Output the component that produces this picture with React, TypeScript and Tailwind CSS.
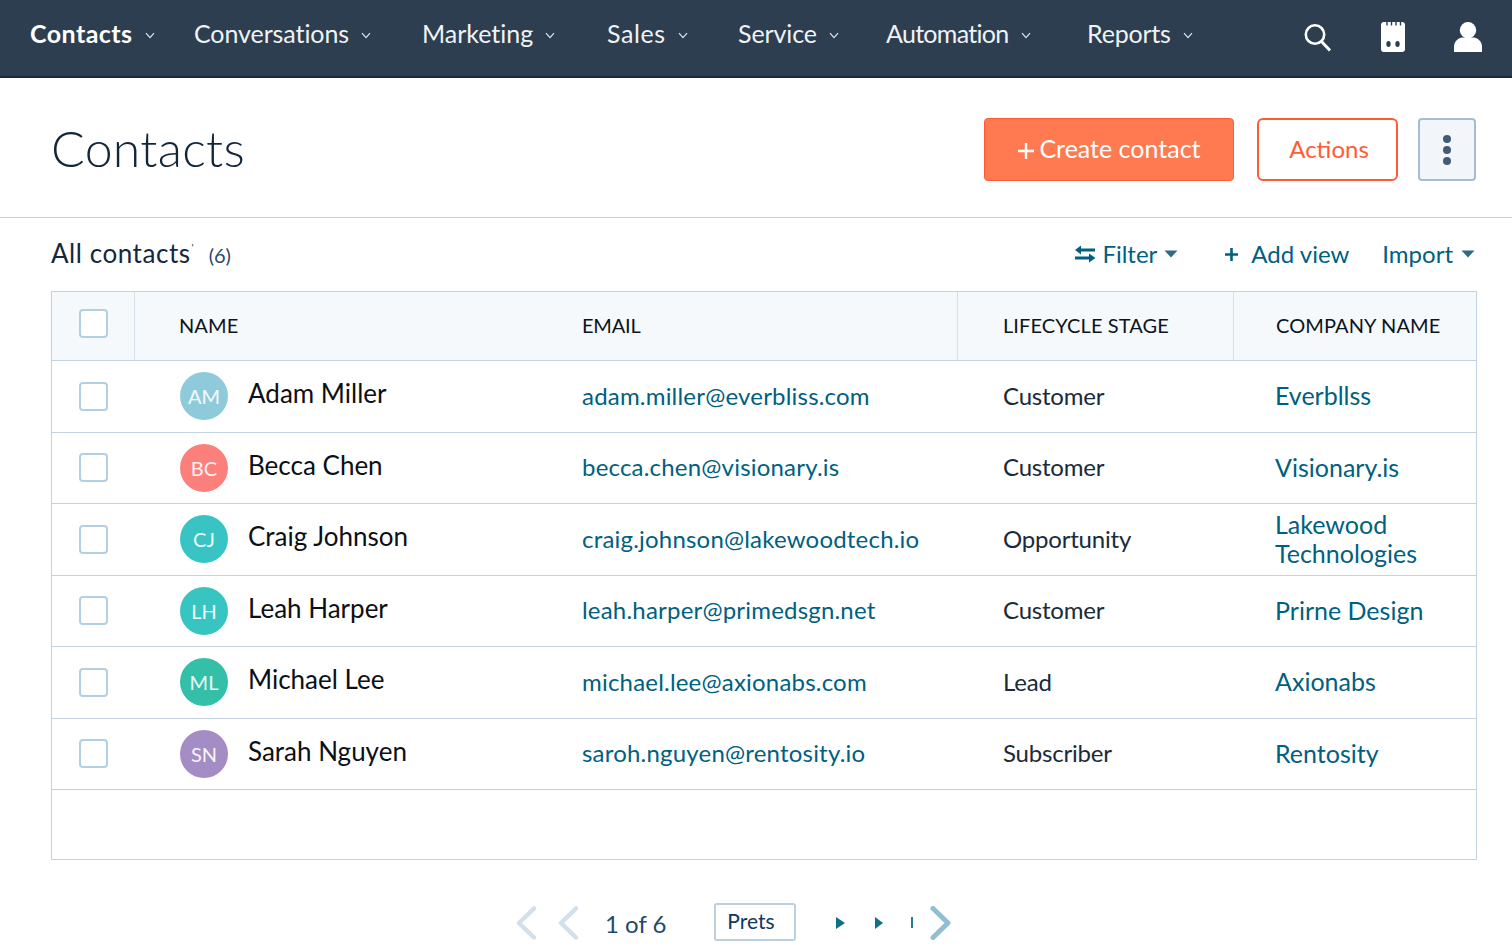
import React from "react";

const F = "font-['Lato','Liberation_Sans',sans-serif]";

const Chevron = () => (
  <svg width="10" height="7" viewBox="0 0 10 7" fill="none" className="mt-[3px]">
    <path d="M1 1.2 L5 5.6 L9 1.2" stroke="#dfe5ea" strokeWidth="1.2" />
  </svg>
);

const Caret = () => (
  <svg width="14" height="8" viewBox="0 0 14 8">
    <path d="M0.5 0.5 H13.5 L7 7.5 Z" fill="#2c6a86" />
  </svg>
);

const navItems = [
  { label: "Contacts", w: "w-[164px]", cls: "font-bold text-white tracking-[0.45px]" },
  { label: "Conversations", w: "w-[228px]", cls: "text-[#f0f3f5] tracking-[-0.08px]" },
  { label: "Marketing", w: "w-[185px]", cls: "text-[#f0f3f5] tracking-[-0.02px]" },
  { label: "Sales", w: "w-[131px]", cls: "text-[#f0f3f5] tracking-[0.6px]" },
  { label: "Service", w: "w-[148px]", cls: "text-[#f0f3f5] tracking-[-0.1px]" },
  { label: "Automation", w: "w-[201px]", cls: "text-[#f0f3f5] tracking-[-0.7px]" },
  { label: "Reports", w: "w-[150px]", cls: "text-[#f0f3f5] tracking-[-0.2px]" },
];

const rows = [
  { i: "AM", name: "Adam Miller", email: "adam.miller@everbliss.com", stage: "Customer", company: ["Everbllss"], bg: "bg-[#8fcadb]" },
  { i: "BC", name: "Becca Chen", email: "becca.chen@visionary.is", stage: "Customer", company: ["Visionary.is"], bg: "bg-[#fb7f7a]" },
  { i: "CJ", name: "Craig Johnson", email: "craig.johnson@lakewoodtech.io", stage: "Opportunity", company: ["Lakewood", "Technologies"], bg: "bg-[#38c4c4]" },
  { i: "LH", name: "Leah Harper", email: "leah.harper@primedsgn.net", stage: "Customer", company: ["Prirne Design"], bg: "bg-[#38c4c0]" },
  { i: "ML", name: "Michael Lee", email: "michael.lee@axionabs.com", stage: "Lead", company: ["Axionabs"], bg: "bg-[#34bfa8]" },
  { i: "SN", name: "Sarah Nguyen", email: "saroh.nguyen@rentosity.io", stage: "Subscriber", company: ["Rentosity"], bg: "bg-[#a48cc4]" },
];

const Check = () => (
  <div className="w-[29px] h-[29px] rounded-[4px] border-2 border-[#b4cfe2] bg-white" />
);

export default function App() {
  return (
    <div className={`${F} w-[1512px] h-[951px] overflow-hidden bg-white text-[#0b1f33]`}>
      <nav className="h-[78px] bg-[#2d3e50] border-b-2 border-[#1a2838] flex items-center pl-[30px] pr-[30px] pb-[8px]">
        {navItems.map((n) => (
          <div key={n.label} className={`${n.w} flex items-center gap-[12px] text-[25px] ${n.cls}`}>
            <span>{n.label}</span>
            <Chevron />
          </div>
        ))}
        <div className="flex items-center ml-auto gap-[49px] mt-[6px]">
          <svg width="28" height="30" viewBox="0 0 28 30" fill="none">
            <circle cx="11" cy="12.5" r="9.2" stroke="#fff" strokeWidth="2.6" />
            <path d="M17.5 19.5 L26 28.5" stroke="#fff" strokeWidth="3" />
          </svg>
          <svg width="24" height="30" viewBox="0 0 24 30">
            <rect x="0" y="0" width="24" height="30" rx="3" fill="#fff" />
            <path d="M6 0 V3.5 M10.5 0 V3.5 M15 0 V3.5 M19.5 0 V3.5" stroke="#2d3e50" strokeWidth="1.4" />
            <ellipse cx="7.5" cy="22" rx="2.2" ry="3" fill="#2d3e50" />
            <ellipse cx="16.5" cy="22" rx="2.2" ry="3" fill="#2d3e50" />
          </svg>
          <svg width="28" height="30" viewBox="0 0 28 30">
            <circle cx="14" cy="8.2" r="8.2" fill="#fff" />
            <path d="M0 30 V24.5 C0 19.5 4.5 15.5 8.5 15.5 H19.5 C23.5 15.5 28 19.5 28 24.5 V30 Z" fill="#fff" />
          </svg>
        </div>
      </nav>

      <header className="h-[140px] border-b border-[#c5ced8] flex items-center justify-between pl-[51px] pr-[36px] pt-[4px]">
        <h1 className="text-[50px] font-light text-[#12263a] tracking-[0.3px] -mt-[3px]">Contacts</h1>
        <div className="flex items-center -mt-[1px]">
          <button className="w-[250px] h-[63px] rounded-[4px] bg-[#ff7a50] border border-[#ff5c35] text-white text-[25px] flex items-center justify-center gap-[5px] pl-[1px]">
            <svg width="16" height="16" viewBox="0 0 16 16" className="mt-[4px]"><path d="M8 0 V16 M0 8 H16" stroke="#fff" strokeWidth="2.4" /></svg>
            Create contact
          </button>
          <button className="w-[141px] h-[63px] ml-[23px] rounded-[6px] bg-white border-2 border-[#ff5c35] text-[#ff5c35] text-[24px] pl-[3px]">Actions</button>
          <button className="w-[58px] h-[63px] ml-[20px] rounded-[4px] bg-[#f2f6fa] border-2 border-[#a5bdd0] flex flex-col items-center justify-center gap-[3px] pt-[2px]">
            <span className="w-[8px] h-[8px] rounded-full bg-[#425b76]" />
            <span className="w-[8px] h-[8px] rounded-full bg-[#425b76]" />
            <span className="w-[8px] h-[8px] rounded-full bg-[#425b76]" />
          </button>
        </div>
      </header>

      <div className="h-[73px] flex items-center justify-between pl-[51px] pr-[37px] pb-[1px]">
        <div className="flex items-baseline -mt-[2px]">
          <span className="text-[26px] text-[#14283c] tracking-[0.55px]">All contacts</span>
          <span className="text-[10px] self-start mt-[6px] ml-[1px]">'</span>
          <span className="text-[20px] text-[#27496b] ml-[15px]">(6)</span>
        </div>
        <div className="flex items-center text-[24px] text-[#00607f]">
          <svg width="22" height="20" viewBox="0 0 22 20" className="mr-[6px]">
            <path d="M6 6 H21 M1 14 H15" stroke="#00607f" strokeWidth="3" />
            <path d="M7 1.5 L1 6 L7 10.5 Z M15 9.5 L21.5 14 L15 18.5 Z" fill="#00607f" />
          </svg>
          <span>Filter</span>
          <span className="ml-[7px]"><Caret /></span>
          <svg width="15" height="15" viewBox="0 0 15 15" className="ml-[46px] mr-[12px]">
            <path d="M7.5 1 V14 M1 7.5 H14" stroke="#00607f" strokeWidth="2.6" />
          </svg>
          <span>Add view</span>
          <span className="ml-[33px]">Import</span>
          <span className="ml-[8px]"><Caret /></span>
        </div>
      </div>

      <div className="mx-[51px] w-[1426px] h-[569px] border border-[#c3d2e0] text-[25px]">
        <div className="h-[69px] grid grid-cols-[83px_447px_376px_276px_1fr] bg-[#f6f9fc] border-b border-[#c3d2e0] text-[20px] tracking-[0.1px] text-[#0b1420]">
          <div className="border-r border-[#d5e0ea] flex items-start pt-[17px] pl-[27px]"><Check /></div>
          <div className="flex items-center pl-[44px] pb-[2px]">NAME</div>
          <div className="flex items-center border-r border-[#d5e0ea] pb-[2px] tracking-[-0.2px]">EMAIL</div>
          <div className="flex items-center border-r border-[#d5e0ea] pl-[45px] pb-[2px]">LIFECYCLE STAGE</div>
          <div className="flex items-center pl-[42px] pb-[2px]">COMPANY NAME</div>
        </div>
        {rows.map((r) => (
          <div key={r.i} className="h-[71.5px] grid grid-cols-[83px_447px_376px_276px_1fr] border-b border-[#c3d2e0] items-center">
            <div className="pl-[27px]"><Check /></div>
            <div className="flex items-center pl-[45px]">
              <div className={`w-[48px] h-[48px] rounded-full ${r.bg} text-white/90 text-[20px] flex items-center justify-center shrink-0`}>{r.i}</div>
              <span className="ml-[20px] text-[26px] text-[#0c0f14] -mt-[5px]">{r.name}</span>
            </div>
            <div className="text-[#00607f] text-[24px] tracking-[0.2px] pb-[1px]">{r.email}</div>
            <div className="pl-[45px] text-[#1a2a3a] text-[24px] tracking-[-0.2px] pb-[1px]">{r.stage}</div>
            <div className="pl-[41px] text-[#00607f] leading-[29px] pb-[1px]">
              {r.company.map((c) => <div key={c}>{c}</div>)}
            </div>
          </div>
        ))}
      </div>

      <div className="h-[73px] mt-[16px] flex items-center justify-start pl-[515px] pt-[20px] text-[#1d4a6e]">
        <svg width="22" height="34" viewBox="0 0 22 34" fill="none"><path d="M19 2.5 L4 17 L19 31.5" stroke="#d3e0ec" strokeWidth="4.5" strokeLinecap="round" strokeLinejoin="round" /></svg>
        <svg width="22" height="34" viewBox="0 0 22 34" fill="none" className="ml-[20px]"><path d="M19 2.5 L4 17 L19 31.5" stroke="#d3e0ec" strokeWidth="4.5" strokeLinecap="round" strokeLinejoin="round" /></svg>
        <span className="ml-[26px] text-[24px] mt-[3px]">1 of 6</span>
        <div className="ml-[48px] w-[82px] h-[38px] -mt-[2px] rounded-[3px] border-2 border-[#bccfdf] flex items-center justify-center text-[21px] text-[#12385a] pr-[9px] pb-[2px]">Prets</div>
        <svg width="9" height="12" viewBox="0 0 9 12" className="ml-[40px]"><path d="M0 0 L9 6 L0 12 Z" fill="#0f6f8c" /></svg>
        <svg width="8" height="12" viewBox="0 0 8 12" className="ml-[30px]"><path d="M0 0 L8 6 L0 12 Z" fill="#0f6f8c" /></svg>
        <div className="ml-[28px] w-[2px] h-[11px] bg-[#2a7c96]" />
        <svg width="22" height="34" viewBox="0 0 22 34" fill="none" className="ml-[17px]"><path d="M3 2.5 L18 17 L3 31.5" stroke="#92bed2" strokeWidth="5" strokeLinecap="round" strokeLinejoin="round" /></svg>
      </div>
    </div>
  );
}
